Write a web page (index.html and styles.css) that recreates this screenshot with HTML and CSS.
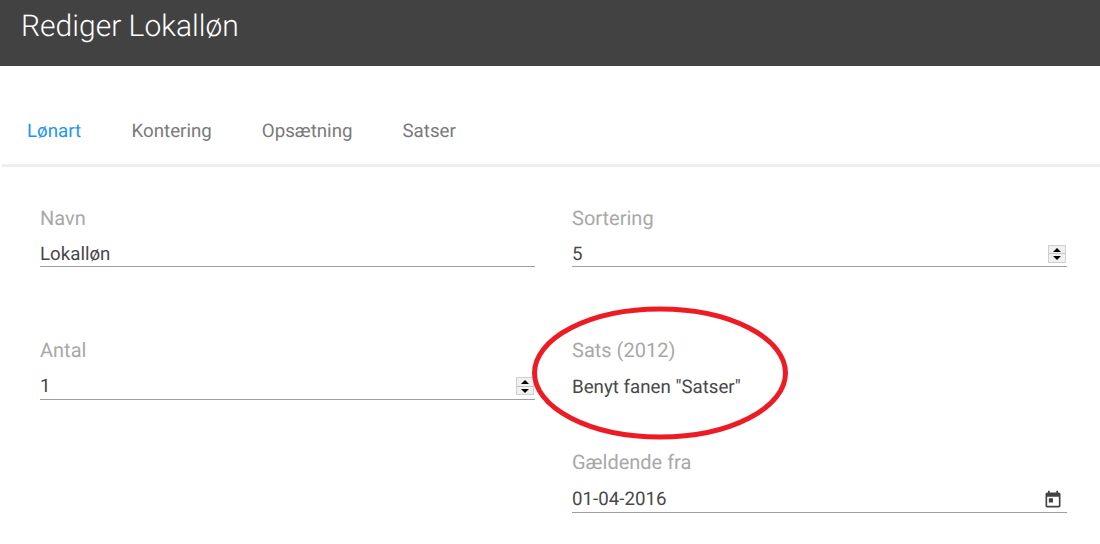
FILE: index.html
```html
<!DOCTYPE html>
<html lang="da">
<head>
    <meta charset="UTF-8">
    <meta name="viewport" content="width=device-width, initial-scale=1.0">
    <title>Rediger Lokalløn</title>
    <link rel="stylesheet" href="styles.css">
</head>
<body>
    <header class="toolbar">
        <h1 class="toolbar-title">Rediger Lokalløn</h1>
    </header>

    <nav class="tabs">
        <a class="tab active">Lønart</a>
        <a class="tab">Kontering</a>
        <a class="tab">Opsætning</a>
        <a class="tab">Satser</a>
    </nav>

    <form class="form">
        <div class="column">
            <div class="field">
                <label class="field-label">Navn</label>
                <div class="field-input">
                    <input class="field-value" type="text" value="Lokalløn">
                </div>
            </div>
            <div class="field">
                <label class="field-label">Antal</label>
                <div class="field-input">
                    <input class="field-value" type="number" value="1">
                    <div class="stepper"><span class="step up"></span><span class="step down"></span></div>
                </div>
            </div>
        </div>
        <div class="column">
            <div class="field">
                <label class="field-label">Sortering</label>
                <div class="field-input">
                    <input class="field-value" type="number" value="5">
                    <div class="stepper"><span class="step up"></span><span class="step down"></span></div>
                </div>
            </div>
            <div class="field short">
                <label class="field-label">Sats (2012)</label>
                <div class="field-text">Benyt fanen "Satser"</div>
                <svg class="circle" width="260" height="138" viewBox="0 0 260 138">
                    <ellipse cx="130" cy="69" rx="125.500" ry="64" fill="none" stroke="#ed1c24" stroke-width="5"/>
                </svg>
            </div>
            <div class="field last">
                <label class="field-label">Gældende fra</label>
                <div class="field-input date">
                    <input class="field-value" type="text" value="01-04-2016">
                    <svg class="date-icon" width="20" height="20" viewBox="0 0 24 24">
                        <path fill="#424242" d="M19 3h-1V1h-2v2H8V1H6v2H5c-1.100 0-2 .9-2 2v14c0 1.100.9 2 2 2h14c1.100 0 2-.9 2-2V5c0-1.100-.9-2-2-2zm0 16H5V8h14v11zM7 10h5v5H7z"/>
                    </svg>
                </div>
            </div>
        </div>
    </form>
</body>
</html>
```

FILE: styles.css
```css
body {
    font-family: Roboto, sans-serif;
    background-color: #fff;
    margin: 0;
    color: #424242;
    text-rendering: geometricPrecision;
}

.toolbar {
    background-color: #424242;
    height: 66px;
    padding-left: 21px;
    box-sizing: border-box;
}

.toolbar-title {
    margin: 0;
    color: #fff;
    font-size: 30px;
    font-weight: 300;
    line-height: 54px;
}

.tabs {
    display: flex;
    gap: 50px;
    margin: 40px 0 0 2px;
    padding-left: 25px;
    height: 58px;
    border-bottom: 3px solid #eee;
}

.tab {
    color: #7a7a7a;
    font-size: 18.72px;
    line-height: 50px;
}

.tab:nth-child(2) {
    margin-left: 0.500px;
}

.tab.active {
    color: #2196f3;
}

.form {
    display: flex;
    gap: 37px;
    padding: 39px 0 0 40px;
}

.column {
    width: 495px;
}

.field {
    position: relative;
    height: 132.400px;
}

.field.short {
    height: 112px;
}

.field.last {
    height: auto;
}

.field-label {
    display: block;
    color: #a8a8a8;
    font-size: 20px;
    line-height: 24px;
    margin-bottom: 9.400px;
}

.field-input {
    display: flex;
    align-items: center;
    box-sizing: border-box;
    height: 28px;
    padding-top: 2px;
    border-bottom: 1px solid #9e9e9e;
}

.field-input.date {
    height: 29px;
}

.field-value {
    flex: 1;
    min-width: 0;
    border: none;
    outline: none;
    padding: 0;
    background: none;
    color: #484848;
    font-family: inherit;
    font-size: 18.72px;
    line-height: 26px;
    text-rendering: geometricPrecision;
}

.field-value::-webkit-inner-spin-button {
    display: none;
}

.field-text {
    padding-top: 1px;
    color: #484848;
    font-size: 18.72px;
    line-height: 28px;
}

.stepper {
    display: flex;
    flex-direction: column;
    width: 18px;
    height: 18px;
    margin-right: 1px;
    border: 1px solid #d0d0d0;
    box-sizing: border-box;
}

.step {
    flex: 1;
    display: flex;
    justify-content: center;
    align-items: center;
    background-color: #f0f0f0;
}

.step.up {
    border-bottom: 1px solid #c4c4c4;
}

.step::before {
    content: "";
    border-left: 4px solid transparent;
    border-right: 4px solid transparent;
}

.step.up::before {
    border-bottom: 4px solid #000;
}

.step.down::before {
    border-top: 4px solid #000;
}

.date-icon {
    margin-right: 4px;
    margin-top: 2px;
}

.circle {
    position: absolute;
    left: -42px;
    top: -34px;
}
```
